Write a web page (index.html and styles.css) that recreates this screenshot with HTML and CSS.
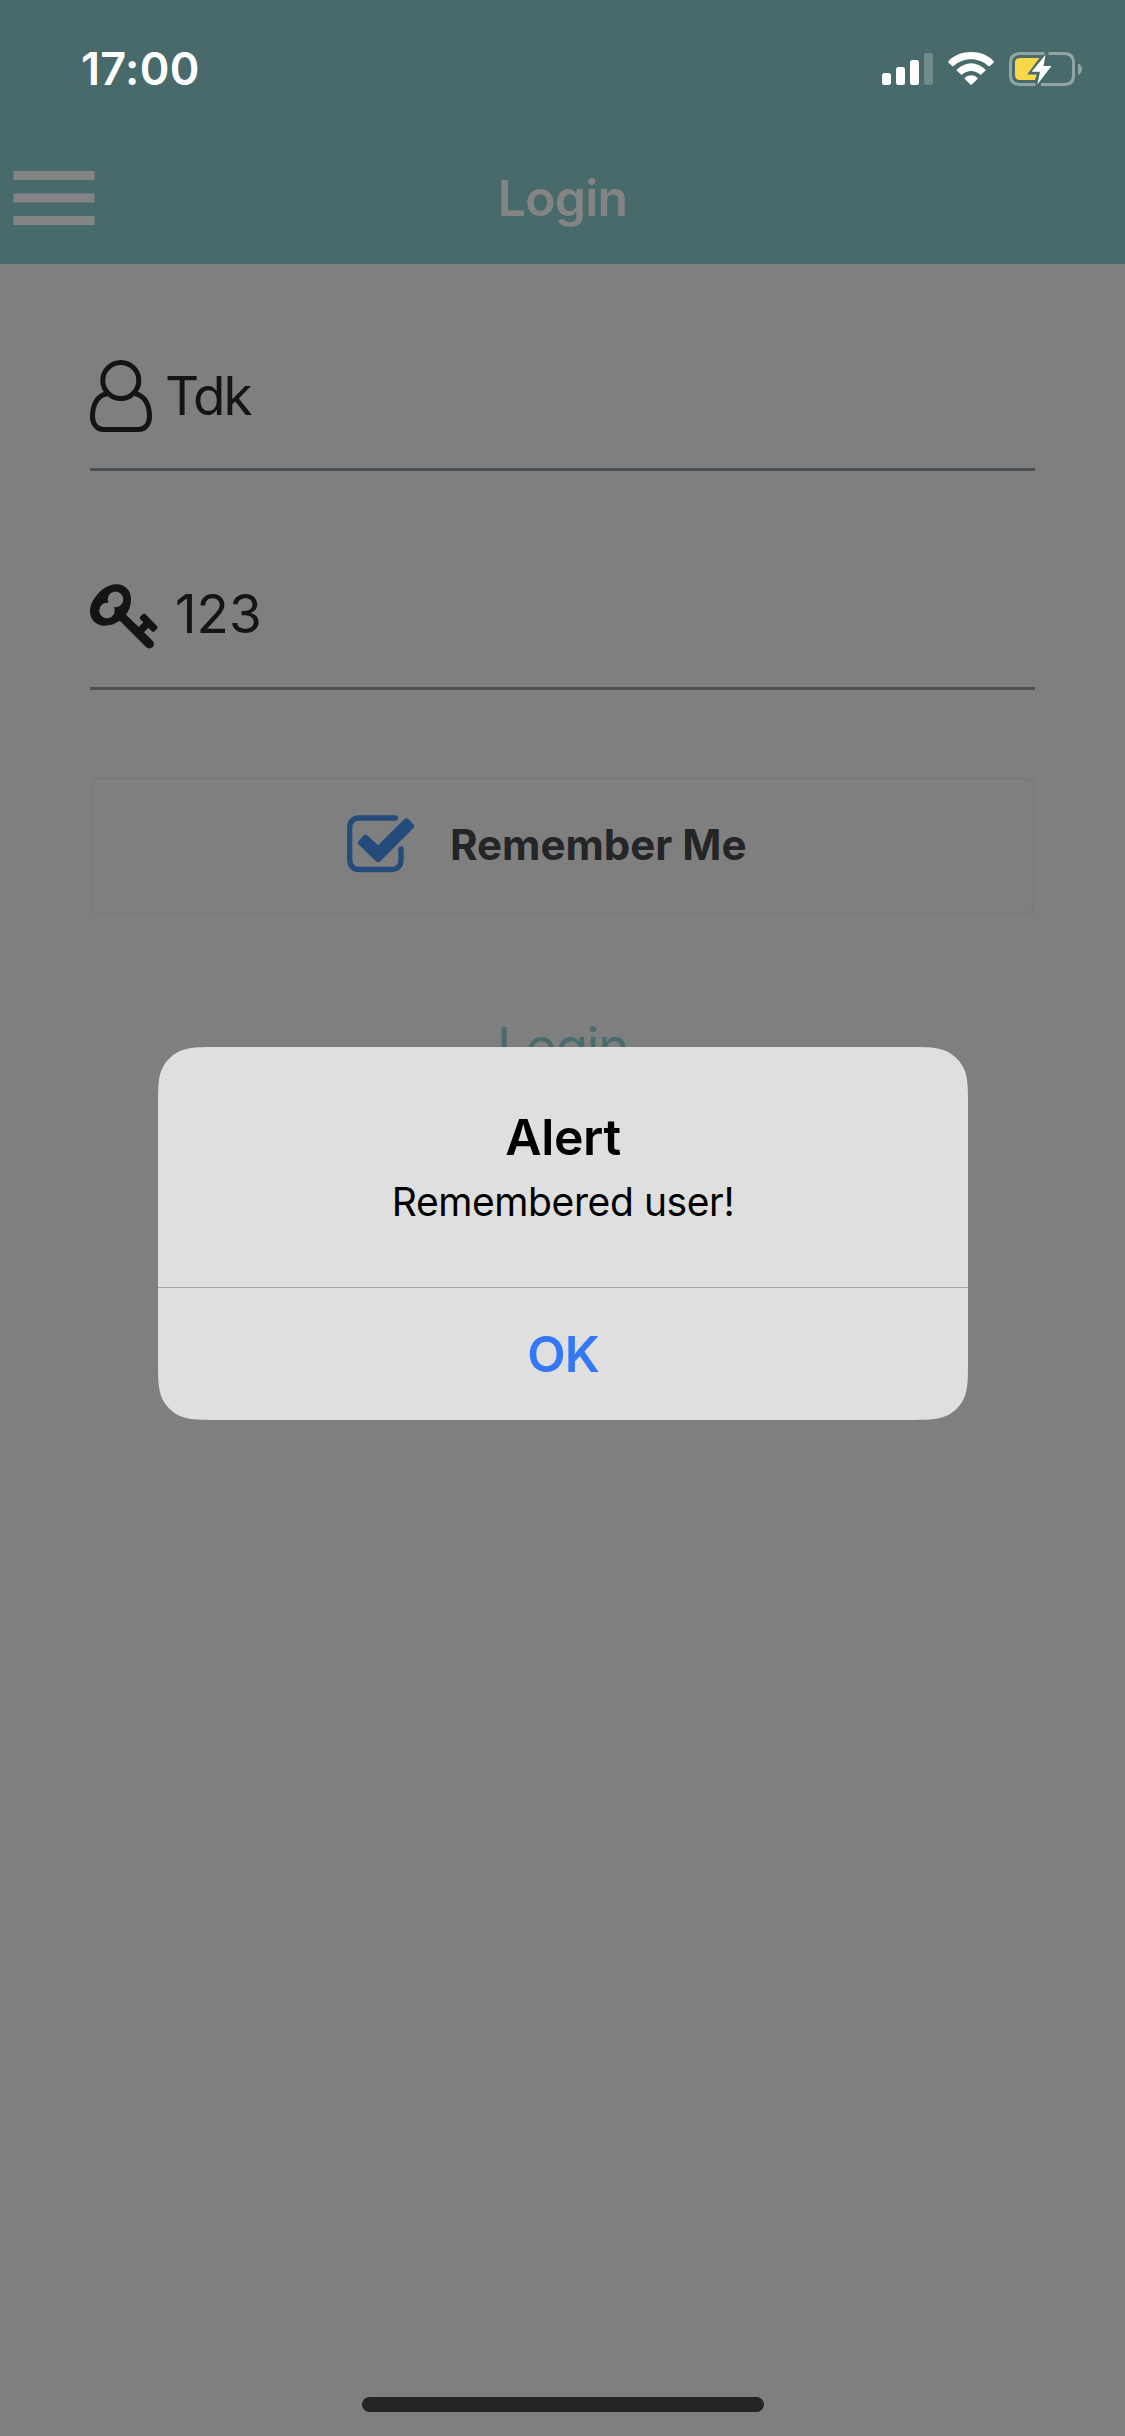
FILE: index.html
```html
<!DOCTYPE html>
<html lang="en">
<head>
<meta charset="utf-8">
<title>Login</title>
<link rel="stylesheet" href="styles.css">
</head>
<body>
<div class="screen">
  <header class="header">
    <div class="status">
      <span class="time">17:00</span>
      <svg class="status-icons" width="204" height="40" viewBox="0 0 204 40">
        <g fill="#fff">
          <rect x="0" y="23" width="9" height="12" rx="2.5"/>
          <rect x="14" y="17" width="9" height="18" rx="2.5"/>
          <rect x="28" y="10" width="9" height="25" rx="2.5"/>
          <rect x="42" y="3" width="9" height="32" rx="2.5" fill-opacity=".22"/>
          <path d="M66.3 11.4C77-1 101-1 111.800 11.400Q112.200 12 111.800 12.500L107.500 16.200Q107 16.600 106.400 16C97 7 81 7 71.700 16Q71 16.600 70.600 16.200L66.300 12.500Q65.900 12 66.300 11.400Z"/>
          <path d="M74.700 19.700C83 11 95.500 11 103.500 19.700Q103.800 20.200 103.500 20.600L99.200 24.600Q98.700 25 98.200 24.500C93 19.800 85.300 19.800 80 24.500Q79.500 25 79 24.600L74.700 20.600Q74.400 20.200 74.700 19.700Z"/>
          <path d="M82.800 28C86 24.300 92.300 24.300 95.500 28Q95.900 28.500 95.500 28.900L89.800 34.600Q89.100 35.200 88.500 34.600L82.800 28.900Q82.400 28.500 82.800 28Z"/>
        </g>
        <g fill="none" stroke="#fff" stroke-opacity=".4" stroke-width="3">
          <path d="M162.500 3.500H138.500C132 3.500 128.500 7 128.500 13V25.500C128.500 31.500 132 34.500 138.500 34.500H153.500"/>
          <path d="M166.500 3.500H182C188.500 3.500 191.500 7 191.500 13V25.500C191.500 31.500 188.500 34.500 182 34.500H159"/>
        </g>
        <path d="M196 13.500C201.300 15.500 201.300 23 196 25Z" fill="#fff" fill-opacity=".4"/>
        <path d="M138 8H157.500L145.200 24.500H154.800L153 30H138Q133 30 133 25V13Q133 8 138 8Z" fill="#f8d748"/>
        <path d="M163.500 4.700L149.600 21.800H158L155.300 34.500L169.500 16H161.500Z" fill="#fff"/>
      </svg>
    </div>
    <div class="nav">
      <svg class="menu" width="82" height="54" viewBox="0 0 82 54"><path d="M.5 0h81v9H.5zM.5 22.500h81v9H.5zM.5 45h81v9H.5z" fill="#848484"/></svg>
      <h1 class="title">Login</h1>
      <span></span>
    </div>
  </header>
  <main class="form">
    <div class="field">
      <svg class="user-icon" width="62" height="72" viewBox="0 0 62 72" fill="none" stroke="#141414" stroke-width="5">
        <circle cx="30.800" cy="20.500" r="18"/>
        <path d="M17 33.800C7.500 35.500 2.500 44.500 2.500 56.500C2.500 64 7 69.500 13.500 69.500H48.500C55 69.500 59.500 64 59.500 56.500C59.500 44.500 54.500 35.500 45 33.800"/>
      </svg>
      <span class="value value-name">Tdk</span>
    </div>
    <div class="field field-key">
      <svg class="key-icon" width="69" height="66" viewBox="0 0 69 66">
        <path fill="#141414" fill-rule="evenodd" d="M5 13.500C10 6.500 17 0.500 26.500 0.300C35 0.300 41 6.500 41 15C41 21.500 39 26.500 36 30.800L48.700 43L53.300 38.300L50.200 35.200Q49 33.800 50.300 32.500L52.800 30.200Q54.200 29 55.500 30.300L67 42Q68.300 43.500 67 44.800L64.500 47.200Q63.200 48.500 61.800 47.200L58.300 43.800L54 48.300L62.300 56.500Q65.500 60.200 62.600 63Q59.600 65.800 56 63L29.800 36.800C25 40 20 41.700 14.500 41.700C6 41.700 0 35.500 0 27C0 22 2 17.500 5 13.500ZM18.500 18.800A7.800 7.800 0 1 1 24 23A7.800 7.800 0 1 1 18.500 18.800Z"/>
      </svg>
      <span class="value">123</span>
    </div>
    <div class="remember">
      <svg class="check-icon" width="68" height="58" viewBox="0 0 68 58">
        <path d="M48.300 3H12.500C6.500 3 2.700 6.500 2.700 12.500V45C2.700 51 6.500 54.500 12.500 54.500H44.500C50.500 54.500 54 51 54 45V34" fill="none" stroke="#234b7b" stroke-width="5.300" stroke-linecap="round"/>
        <path d="M11 27L16.500 20.300Q18.300 18.800 20.300 20.300L31 30.300L57.500 4Q59.500 2.500 61.500 4L66.500 9.500Q68 11.200 66.500 13L33.500 46Q31 48.300 28.700 46L11 29Q10 28 11 27Z" fill="#234b7b"/>
      </svg>
      <span class="remember-label">Remember Me</span>
    </div>
    <div class="login-link">Login</div>
  </main>
  <div class="home-bar"></div>
  <div class="alert">
    <div class="alert-body">
      <h2 class="alert-title">Alert</h2>
      <p class="alert-message">Remembered user!</p>
    </div>
    <div class="alert-action">OK</div>
  </div>
</div>
</body>
</html>
```
FILE: styles.css
```css
* { box-sizing: border-box; }

body {
  margin: 0;
  font-family: Inter, "Liberation Sans", sans-serif;
}

.screen {
  position: relative;
  display: flex;
  flex-direction: column;
  width: 1125px;
  height: 2436px;
  background: #7f7f7f;
}

.header {
  height: 264px;
  background: #496a6a;
}

.status {
  display: flex;
  justify-content: space-between;
  height: 132px;
  padding: 0 39px 0 81px;
}

.time {
  line-height: 138px;
  font-size: 45px;
  font-weight: 600;
  letter-spacing: 0.3px;
  color: #fff;
}

.status-icons { margin-top: 50px; }

.nav {
  display: grid;
  grid-template-columns: 1fr auto 1fr;
  align-items: center;
  height: 132px;
  padding: 0 13px;
}

.title {
  margin: 0;
  font-size: 50px;
  font-weight: 600;
  letter-spacing: -0.8px;
  line-height: 132px;
  color: #848484;
}

.form {
  flex: 1;
  padding: 0 90px;
}

.field {
  display: flex;
  align-items: center;
  height: 207px;
  padding-top: 60px;
  border-bottom: 3px solid #4a5054;
  color: #141414;
}

.field-key {
  height: 219px;
  padding-top: 69px;
}

.key-icon { margin-top: 6px; }

.value {
  margin-left: 16px;
  font-size: 53px;
  line-height: 72px;
}

.value-name {
  margin-left: 13px;
  letter-spacing: -2px;
}

.remember {
  display: flex;
  align-items: center;
  height: 138px;
  margin-top: 87px;
  padding-left: 254px;
  border: 3px solid #7b7b7b;
  border-radius: 8px;
}

.check-icon { margin-top: -4px; }

.remember-label {
  margin: -3px 0 0 35px;
  font-size: 42px;
  font-weight: 700;
  color: #242527;
}

.login-link {
  margin-top: 92px;
  font-size: 53px;
  letter-spacing: -1.5px;
  line-height: 80px;
  text-align: center;
  color: #4a6b6b;
}

.home-bar {
  width: 402px;
  height: 15px;
  margin: 0 auto 24px 362px;
  border-radius: 8px;
  background: #242424;
}

/* The dialog floats over the form, with continuous-curvature corners. */
.alert {
  position: absolute;
  top: 1047px;
  left: 158px;
  width: 810px;
  height: 373px;
  clip-path: path("M60 0H750C767.500 0 776 0 785.400 2.900C795.500 6.600 803.400 14.500 807.100 24.600C810 34 810 42.500 810 60V313C810 330.500 810 339 807.100 348.400C803.400 358.500 795.500 366.400 785.400 370.100C776 373 767.500 373 750 373H60C42.500 373 34 373 24.600 370.100C14.500 366.400 6.600 358.500 2.900 348.400C0 339 0 330.500 0 313V60C0 42.500 0 34 2.900 24.600C6.600 14.500 14.500 6.600 24.600 2.900C34 0 42.500 0 60 0Z");
  background: #dfdfdf;
  text-align: center;
  color: #000;
}

.alert-body {
  height: 241px;
  padding-top: 60px;
  border-bottom: 1px solid #a4a4a6;
}

.alert-title {
  margin: 0;
  font-size: 50px;
  font-weight: 600;
  letter-spacing: -0.4px;
  line-height: 60px;
}

.alert-message {
  margin: 10px 0 0;
  font-size: 39px;
  letter-spacing: -0.4px;
  line-height: 50px;
}

.alert-action {
  font-size: 50px;
  font-weight: 600;
  letter-spacing: -1px;
  line-height: 132px;
  color: #3478f6;
}
```
